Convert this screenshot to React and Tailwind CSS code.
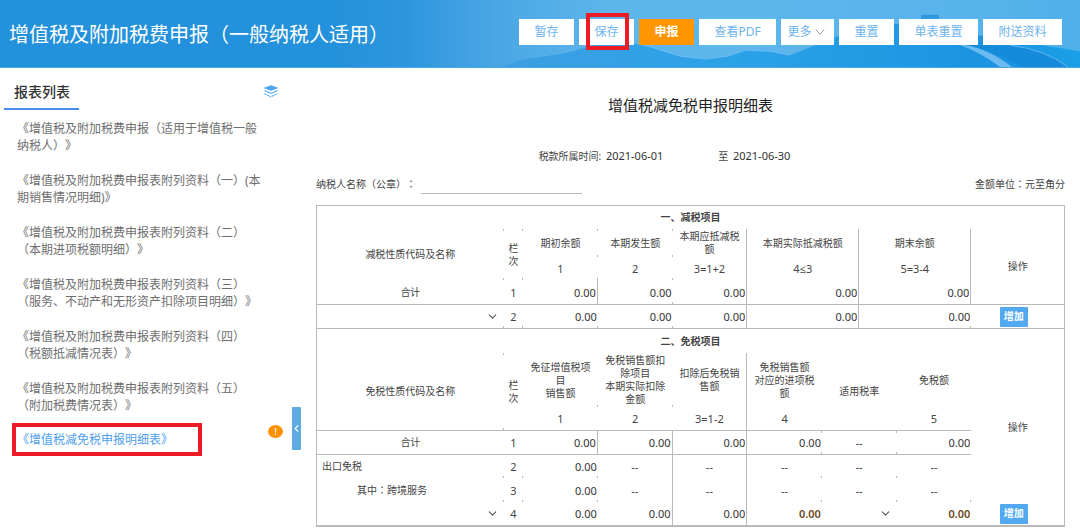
import { ChevronDown, ChevronLeft } from "lucide-react";

const FORMS = [
  "《增值税及附加税费申报（适用于增值税一般纳税人）》",
  "《增值税及附加税费申报表附列资料（一）(本期销售情况明细)》",
  "《增值税及附加税费申报表附列资料（二）（本期进项税额明细）》",
  "《增值税及附加税费申报表附列资料（三）（服务、不动产和无形资产扣除项目明细）》",
  "《增值税及附加税费申报表附列资料（四）（税额抵减情况表）》",
  "《增值税及附加税费申报表附列资料（五）（附加税费情况表）》",
];

const TICK =
  "bg-[linear-gradient(#b9b9b9,#b9b9b9)] bg-no-repeat bg-[size:1px_2px] bg-right-bottom";
const TICKS =
  "bg-[linear-gradient(#b9b9b9,#b9b9b9),linear-gradient(#b9b9b9,#b9b9b9)] bg-no-repeat bg-[size:1px_2px] bg-[position:right_top,right_bottom]";
const B = "border-b border-[#b9b9b9]";
const R = "border-r border-[#b9b9b9]";

function Scenery() {
  return (
    <svg
      className="absolute inset-y-0 right-0 h-full w-[750px]"
      viewBox="0 0 750 68"
      preserveAspectRatio="none"
      aria-hidden="true"
    >
      <defs>
        <linearGradient id="sky" x1="0" x2="1" y1="0" y2="0">
          <stop offset="0" stopColor="#2391db" />
          <stop offset="0.1" stopColor="#2c96dd" />
          <stop offset="0.22" stopColor="#4aa6e4" />
          <stop offset="0.38" stopColor="#5fb6ec" />
          <stop offset="0.8" stopColor="#5ab4eb" />
          <stop offset="1" stopColor="#50b0ea" />
        </linearGradient>
        <linearGradient id="hill" x1="0" x2="1" y1="0" y2="0">
          <stop offset="0" stopColor="#3d9fe2" />
          <stop offset="0.4" stopColor="#2ba2e8" />
          <stop offset="0.85" stopColor="#1b93e0" />
          <stop offset="1" stopColor="#19a0e6" />
        </linearGradient>
      </defs>
      <rect width="750" height="68" fill="url(#sky)" />
      <path
        d="M170 68 L190 61 L235 54 L275 43 L300 42 L325 49 L350 57 L375 60 L398 57 L415 51 L440 52 L460 56 L500 40 L535 25 L565 24 L600 30 L650 36 L700 44 L750 52 V68 Z"
        fill="url(#hill)"
      />
      <path
        d="M275 43 L300 42 L325 49 L350 57 L375 60 L398 57 L415 51 L440 52 L460 56"
        fill="none"
        stroke="#6cc0f2"
        strokeWidth="0.8"
      />
      <path d="M591 15 h18 v5 h-18 z" fill="#3197de" />
      <path d="M680 46 Q715 50 738 68 H690 Q670 55 640 46 Z" fill="#168bdc" />
      <path d="M628 45 Q655 47 682 68 H670 Q650 53 628 45 Z" fill="#6bbaf0" />
      <path d="M680 46 Q715 50 738 68" fill="none" stroke="#5fb8ee" />
    </svg>
  );
}

function ToolButton({ className = "w-[55px]", children }) {
  return (
    <button
      type="button"
      className={`relative flex h-[26px] items-center justify-center bg-white text-[12px] text-[#6db3ec] ${className}`}
    >
      {children}
    </button>
  );
}

function LayersIcon() {
  return (
    <svg className="mt-[5px] h-[13px] w-[14px]" viewBox="0 0 14 13" fill="none" stroke="#4ea6ee" strokeWidth="1.1">
      <path d="M7 0.8 L13.2 3 L7 5.2 L0.8 3 Z" fill="#4ea6ee" />
      <path d="M0.6 5.6 L7 8.4 L13.4 5.6" />
      <path d="M0.6 8.8 L7 11.8 L13.4 8.8" strokeDasharray="2 0.7" />
    </svg>
  );
}

// full-width colon, centred in its box
function Colon() {
  return <span className="font-['Noto_Sans_CJK_TC',sans-serif]">：</span>;
}

function Sidebar() {
  return (
    <aside className="w-[292px] shrink-0 text-[12px] leading-[17px] text-[#6e6e6e]">
      <div className="flex items-center justify-between pl-1 pr-[14px]">
        <h2 className="h-[42px] w-[75px] border-b-2 border-[#4a8cec] pl-[10px] text-[14px] font-medium leading-[48px] text-[#333]">
          报表列表
        </h2>
        <LayersIcon />
      </div>
      <ul className="flex flex-col gap-[18px] pb-[9px] pl-[17px] pr-[30px] pt-[10px]">
        {FORMS.map((name) => (
          <li key={name}>
            <a href="#" className="block">{name}</a>
          </li>
        ))}
      </ul>
      <div className="flex items-start justify-between pl-3 pr-[9px]">
        <a
          href="#"
          aria-current="page"
          className="flex h-[33px] w-[190px] items-center border-4 border-[#ed1c24] pl-px text-[#4ea0ea]"
        >
          《增值税减免税申报明细表》
        </a>
        <svg className="mt-[2px] h-[13px] w-[15px]" viewBox="0 0 15 13" aria-label="提示">
          <ellipse cx="7.5" cy="6.5" rx="7.5" ry="6.5" fill="#ff9100" />
          <path d="M7.5 3 V7.6 M7.5 8.6 V10" stroke="#fff" strokeWidth="1.2" />
        </svg>
      </div>
    </aside>
  );
}

function Num({ className = "", label, bold, span }) {
  return (
    <td className={className} colSpan={span}>
      <input
        type="text"
        aria-label={label}
        defaultValue="0.00"
        className={`block w-full bg-transparent pr-px text-right text-[11px] outline-none ${
          bold ? "font-semibold text-[#6b4a1c]" : "text-[#333]"
        }`}
      />
    </td>
  );
}

function PickCell({ className, label, span }) {
  return (
    <td className={className} colSpan={span}>
      <div className="flex items-center justify-end pr-[5px]">
        <select aria-label={label} className="h-4 min-w-0 flex-1 appearance-none bg-transparent outline-none">
          <option value="" />
        </select>
        <ChevronDown size={13} strokeWidth={2} className="text-[#555]" />
      </div>
    </td>
  );
}

function AddCell({ className = "" }) {
  return (
    <td className={`pr-2 ${className}`}>
      <button type="button" className="mx-auto block h-5 w-7 rounded-[1px] bg-[#52a9f0] text-[10px] font-bold text-white">
        增加
      </button>
    </td>
  );
}

function ReliefTable() {
  return (
    <table className="w-full table-fixed border-separate border-spacing-0 border border-b-2 border-[#b9b9b9] text-center text-[10px] leading-[13px] text-[#444]">
      <colgroup>
        <col className="w-[25%]" />
        <col className="w-[2.6%]" />
        <col className="w-[10%]" />
        <col className="w-[10%]" />
        <col className="w-[10%]" />
        <col className="w-[10%]" />
        <col className="w-[5%]" />
        <col className="w-[5%]" />
        <col className="w-[10%]" />
        <col />
      </colgroup>
      <tbody>
        <tr className="h-[23px]">
          <th colSpan={10} className="font-bold">一、减税项目</th>
        </tr>
        <tr className="h-[28px]">
          <td rowSpan={2} className={TICKS}>减税性质代码及名称</td>
          <td rowSpan={2} className={`px-1 ${TICKS}`}>栏次</td>
          <td className={`px-1.5 ${TICKS}`}>期初余额</td>
          <td className={`px-1.5 ${TICKS}`}>本期发生额</td>
          <td className={`px-1.5 ${R}`}>本期应抵减税额</td>
          <td colSpan={2} className={R}>本期实际抵减税额</td>
          <td colSpan={2} className={R}>期末余额</td>
          <td rowSpan={3} className={B}>操作</td>
        </tr>
        <tr className="h-[23px] text-[11px]">
          <td className={TICK}>1</td>
          <td className={TICK}>2</td>
          <td className={R}>3=1+2</td>
          <td colSpan={2} className={R}>4≤3</td>
          <td colSpan={2} className={R}>5=3-4</td>
        </tr>
        <tr className="h-[25px] text-[11px]">
          <td className={`text-[10px] ${B}`}>合计</td>
          <td className={B}>1</td>
          <Num label="期初余额合计" className={`${B} ${R}`} />
          <Num label="本期发生额合计" className={`${B} ${TICK}`} />
          <Num label="本期应抵减税额合计" className={`${B} ${R}`} />
          <Num label="本期实际抵减税额合计" className={`${B} ${R}`} span={2} />
          <Num label="期末余额合计" className={`${B} ${R}`} span={2} />
        </tr>
        <tr className="h-[24px] text-[11px]">
          <PickCell label="减税性质代码" className={`${B} ${TICK}`} />
          <td className={`${B} ${TICK}`}>2</td>
          <Num label="期初余额" className={`${B} ${TICK}`} />
          <Num label="本期发生额" className={`${B} ${TICK}`} />
          <Num label="本期应抵减税额" className={`${B} ${R}`} />
          <Num label="本期实际抵减税额" className={`${B} ${R}`} span={2} />
          <Num label="期末余额" className={`${B} ${TICK}`} span={2} />
          <AddCell className={B} />
        </tr>

        <tr className="h-[24px]">
          <th colSpan={10} className="font-bold">二、免税项目</th>
        </tr>
        <tr className="h-[54px]">
          <td rowSpan={2} className={`${B} ${TICKS}`}>免税性质代码及名称</td>
          <td rowSpan={2} className={`px-1 ${B}`}>栏次</td>
          <td className={`px-1.5 ${TICK}`}>免征增值税项目<br />销售额</td>
          <td className={`px-1.5 ${TICK}`}>免税销售额扣除项目<br />本期实际扣除金额</td>
          <td className={`px-1.5 ${R}`}>扣除后免税销售额</td>
          <td className="px-1.5">免税销售额<br />对应的进项税额</td>
          <td rowSpan={2} colSpan={2} className={B}>适用税率</td>
          <td>免税额</td>
          <td rowSpan={5}>操作</td>
        </tr>
        <tr className="h-[24px] text-[11px]">
          <td className={B}>1</td>
          <td className={B}>2</td>
          <td className={`${B} ${R}`}>3=1-2</td>
          <td className={B}>4</td>
          <td className={B}>5</td>
        </tr>
        <tr className="h-[24px] text-[11px]">
          <td className={`text-[10px] ${B}`}>合计</td>
          <td className={B}>1</td>
          <Num label="免征增值税项目销售额合计" className={`${B} ${R}`} />
          <Num label="本期实际扣除金额合计" className={`${B} ${R}`} />
          <Num label="扣除后免税销售额合计" className={`${B} ${R}`} />
          <Num label="进项税额合计" className={`${B} ${TICKS}`} />
          <td colSpan={2} className={`${B} ${TICKS}`}>--</td>
          <Num label="免税额合计" className={B} />
        </tr>
        <tr className="h-[23px] text-[11px]">
          <td className={`pl-[5px] text-left text-[10px] ${TICK}`}>出口免税</td>
          <td className={TICK}>2</td>
          <Num label="出口免税销售额" className={TICK} />
          <td className={R}>--</td>
          <td className={R}>--</td>
          <td className={TICK}>--</td>
          <td colSpan={2} className={TICK}>--</td>
          <td>--</td>
        </tr>
        <tr className="h-[24px] text-[11px]">
          <td className={`pl-10 text-left text-[10px] ${TICK}`}>其中<Colon />跨境服务</td>
          <td className={TICK}>3</td>
          <Num label="跨境服务销售额" className={TICK} />
          <td className={R}>--</td>
          <td className={R}>--</td>
          <td className={TICK}>--</td>
          <td colSpan={2} className={TICK}>--</td>
          <td className={TICK}>--</td>
        </tr>
        <tr className="h-[23px] text-[11px]">
          <PickCell label="免税性质代码" />
          <td>4</td>
          <Num label="免征增值税项目销售额" />
          <Num label="本期实际扣除金额" className={R} />
          <Num label="扣除后免税销售额" className={R} />
          <Num label="进项税额" bold />
          <PickCell label="适用税率" span={2} />
          <Num label="免税额" bold />
          <AddCell />
        </tr>
      </tbody>
    </table>
  );
}

export default function App() {
  return (
    <div className="min-h-screen bg-white font-['Noto_Sans','Open_Sans','Noto_Sans_CJK_SC',sans-serif] [text-spacing-trim:space-all]">
      <header className="relative flex h-[68px] items-center justify-between border-b border-[#4aa5e2] bg-[#2391db] pl-[9px] pr-[18px]">
        <Scenery />
        <h1 className="relative whitespace-nowrap pt-[3px] text-[20px] text-white">增值税及附加税费申报（一般纳税人适用）</h1>
        <div className="relative flex gap-[5px] pb-1">
          <ToolButton>暂存</ToolButton>
          <ToolButton>
            保存
            <span className="absolute -top-[6px] left-[7px] h-[37px] w-[43px] border-4 border-[#ed1c24]" />
          </ToolButton>
          <button type="button" className="h-[26px] w-[55px] bg-[#ff9600] text-[12px] font-bold text-white">
            申报
          </button>
          <ToolButton className="w-[77px]">查看PDF</ToolButton>
          <ToolButton className="w-[53px]">
            更多
            <ChevronDown size={16} strokeWidth={1.2} className="text-[#888]" />
          </ToolButton>
          <ToolButton>重置</ToolButton>
          <ToolButton className="w-[79px]">单表重置</ToolButton>
          <ToolButton className="w-[79px]">附送资料</ToolButton>
        </div>
      </header>

      <div className="flex">
        <Sidebar />
        <button type="button" aria-label="收起" className="mt-[339px] flex h-[43px] w-[9px] shrink-0 items-center justify-center rounded-[1px] bg-[#5dabe0] text-white">
          <ChevronLeft size={11} strokeWidth={2.5} className="shrink-0" />
        </button>
        <main className="min-w-0 flex-1 px-[15px] pt-[26px] text-[10px] text-[#444]">
          <h2 className="text-center text-[15px] leading-[22px] text-[#222]">增值税减免税申报明细表</h2>
          <div className="mt-[32px] flex h-4 items-center justify-center gap-[55px] pr-[52px]">
            <p>税款所属时间: <span className="ml-[2px] text-[11px] text-[#333]">2021-06-01</span></p>
            <p>至 <span className="ml-[2px] text-[11px] text-[#333]">2021-06-30</span></p>
          </div>
          <div className="mb-[11px] mt-[10px] flex h-5 items-center justify-between">
            <label className="flex items-center">
              <span>纳税人名称（公章）<Colon /></span>
              <input type="text" className="ml-[5px] h-5 w-[161px] border-b border-[#b9b9b9] bg-transparent outline-none" />
            </label>
            <span>金额单位<Colon />元至角分</span>
          </div>
          <ReliefTable />
        </main>
      </div>
    </div>
  );
}
